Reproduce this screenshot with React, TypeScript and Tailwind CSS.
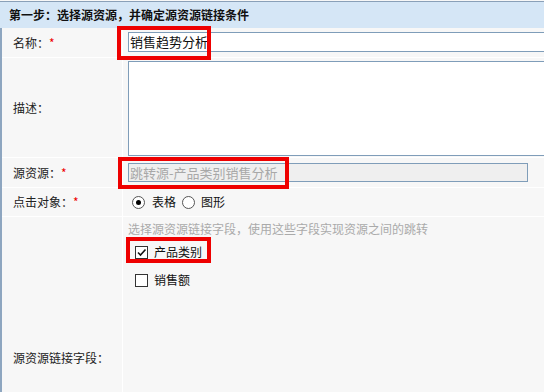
import React from "react";

const font = { fontFamily: '"Noto Sans CJK SC", "Microsoft YaHei", sans-serif' };

function Radio({ checked }: { checked?: boolean }) {
  return (
    <span className="w-[13px] h-[13px] rounded-full border border-[#555] bg-white flex items-center justify-center">
      {checked && <span className="w-[5px] h-[5px] rounded-full bg-black" />}
    </span>
  );
}

function Check({ checked }: { checked?: boolean }) {
  return (
    <span className="w-[13px] h-[13px] border border-[#333] bg-white flex items-center justify-center">
      {checked && (
        <svg width="11" height="11" viewBox="0 0 11 11">
          <path d="M2 5.5 L4.5 8 L9.5 2.5" fill="none" stroke="#111" strokeWidth="1.6" />
        </svg>
      )}
    </span>
  );
}

export default function App() {
  const rows = "flex border-b border-white bg-[#f7f7f7]";
  const label = "w-[121px] shrink-0 border-r border-white flex items-center pl-[11px] text-[12px] text-[#222]";

  return (
    <div className="relative w-[544px] h-[392px] overflow-hidden bg-[#f7f7f7]" style={font}>
      <div className="border-t border-[#8aa0b8] mt-[1px] h-[27px] bg-[#d5e6f6] flex items-center pl-[9px] text-[12px] font-bold text-[#111]">
        第一步：选择源资源，并确定源资源链接条件
      </div>

      <div className="border-l-2 border-[#8ea6c0]">
        <div className={`${rows} h-[30px]`}>
          <div className={label}>
            名称：<span className="text-[#e00]">*</span>
          </div>
          <div className="flex-1 pl-[5px] pt-[4px]">
            <div className="w-[440px] h-[20px] border border-[#7f9db9] bg-white flex items-center pl-[1px] text-[13px] text-[#111]">
              销售趋势分析
            </div>
          </div>
        </div>

        <div className={`${rows} h-[100px]`}>
          <div className={label}>描述：</div>
          <div className="flex-1 pl-[5px] pt-[3px]">
            <div className="w-[440px] h-[95px] border border-[#7f9db9] bg-white" />
          </div>
        </div>

        <div className={`${rows} h-[30px]`}>
          <div className={label}>
            源资源：<span className="text-[#e00]">*</span>
          </div>
          <div className="flex-1 pl-[5px] pt-[5px]">
            <div className="w-[400px] h-[19px] border border-[#7f9db9] bg-[#efefef] flex items-center pl-[1px] text-[13px] text-[#a8a8a8]">
              跳转源-产品类别销售分析
            </div>
          </div>
        </div>

        <div className={`${rows} h-[29px]`}>
          <div className={label}>
            点击对象：<span className="text-[#e00]">*</span>
          </div>
          <div className="flex-1 pl-[9px] flex items-center text-[12px] text-[#111]">
            <Radio checked />
            <span className="ml-[7px]">表格</span>
            <span className="ml-[6px]"><Radio /></span>
            <span className="ml-[6px]">图形</span>
          </div>
        </div>

        <div className={`${rows} h-[282px]`}>
          <div className={label}>源资源链接字段：</div>
          <div className="flex-1 pl-[5px] pt-[4px] text-[12px]">
            <div className="text-[#aaa] leading-[16px]">选择源资源链接字段，使用这些字段实现资源之间的跳转</div>
            <div className="flex items-center h-[16px] mt-[7px] pl-[7px] text-[#111]">
              <Check checked />
              <span className="ml-[6px]">产品类别</span>
            </div>
            <div className="flex items-center h-[16px] mt-[12px] pl-[7px] text-[#111]">
              <Check />
              <span className="ml-[6px]">销售额</span>
            </div>
          </div>
        </div>
      </div>

      <div className="absolute left-[117px] top-[26px] w-[94px] h-[34px] border-4 border-[#ee0000]" />
      <div className="absolute left-[118px] top-[157px] w-[171px] h-[32px] border-4 border-[#ee0000]" />
      <div className="absolute left-[126px] top-[237px] w-[85px] h-[26px] border-4 border-[#ee0000]" />
    </div>
  );
}
